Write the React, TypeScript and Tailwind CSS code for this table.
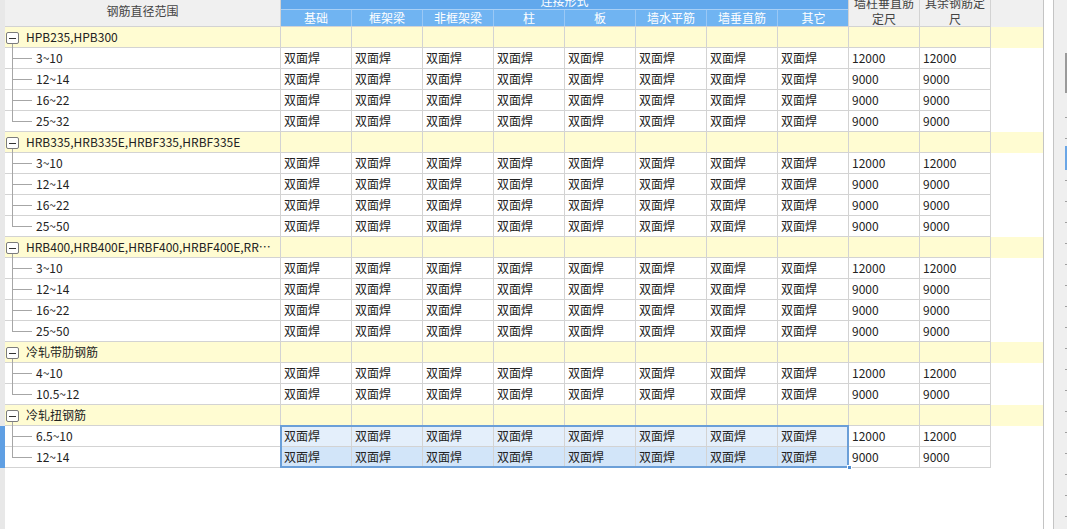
import React from 'react';

type Group = { name: string; items: [string, string][] };

const groups: Group[] = [
  { name: 'HPB235,HPB300', items: [['3~10', '12000'], ['12~14', '9000'], ['16~22', '9000'], ['25~32', '9000']] },
  { name: 'HRB335,HRB335E,HRBF335,HRBF335E', items: [['3~10', '12000'], ['12~14', '9000'], ['16~22', '9000'], ['25~50', '9000']] },
  { name: 'HRB400,HRB400E,HRBF400,HRBF400E,RRB400,RRB400E', items: [['3~10', '12000'], ['12~14', '9000'], ['16~22', '9000'], ['25~50', '9000']] },
  { name: '冷轧带肋钢筋', items: [['4~10', '12000'], ['10.5~12', '9000']] },
  { name: '冷轧扭钢筋', items: [['6.5~10', '12000'], ['12~14', '9000']] },
];

const subHeaders = ['基础', '框架梁', '非框架梁', '柱', '板', '墙水平筋', '墙垂直筋', '其它'];

const cell = 'w-[71px] shrink-0 border-r border-b border-[#d3d3d3] pl-[3px] leading-[20px] truncate';

const TreeBox = () => (
  <div className="absolute left-[1px] top-[5px] flex h-[12px] w-[13px] items-center justify-center rounded-[2px] border border-[#7c7c7c] bg-white">
    <div className="h-px w-[7px] bg-[#333]" />
  </div>
);

const App: React.FC = () => {
  return (
    <div
      className="flex h-[529px] w-[1068px] overflow-hidden bg-white text-[12px] text-[#222]"
      style={{ fontFamily: '"Noto Sans CJK SC", "Noto Sans", sans-serif' }}
    >
      {/* Left row-selector strip */}
      <div className="flex w-[5px] shrink-0 flex-col bg-[#e8e8e8]">
        <div className="h-[426px]" />
        <div className="h-[42px] bg-[#5f9fe3]" />
      </div>

      {/* Main grid panel */}
      <div className="flex w-[1039px] shrink-0 flex-col border-r border-[#c4c4c4]">
        {/* Header */}
        <div className="flex h-[27px] shrink-0 bg-[#f0f0f0]">
          <div className="w-[276px] shrink-0 border-r border-b border-[#d3d3d3] pt-[3px] text-center leading-[16px] text-[#444]">
            钢筋直径范围
          </div>
          <div className="flex w-[568px] shrink-0 flex-col border-r border-b border-[#d3d3d3] text-white">
            <div className="h-[9px] overflow-hidden bg-[#62a8ec]">
              <div className="-mt-[6px] text-center leading-[14px]">连接形式</div>
            </div>
            <div className="h-px bg-[#a9d0f6]" />
            <div className="flex h-[16px] bg-[#70b4f2]">
              {subHeaders.map((h, i) => (
                <div
                  key={h}
                  className={`w-[71px] shrink-0 text-center leading-[16px] ${i < 7 ? 'border-r border-[#9ac8f5]' : 'w-[70px]'}`}
                >
                  {h}
                </div>
              ))}
            </div>
          </div>
          {['墙柱垂直筋', '其余钢筋定'].map((t, i) => (
            <div key={t} className="h-[27px] w-[71px] shrink-0 overflow-hidden border-r border-b border-[#d3d3d3] text-center text-[#444]">
              <div className="-mt-[5px] leading-[16px]">{t}</div>
              <div className="leading-[16px]">{i === 0 ? '定尺' : '尺'}</div>
            </div>
          ))}
          <div className="flex-1" />
        </div>

        {/* Rows */}
        <div className="relative">
          {groups.map((g, gi) => (
            <React.Fragment key={g.name}>
              <div className="flex h-[21px] bg-[#fffcd2]">
                <div className="relative w-[276px] shrink-0 border-r border-b border-[#d3d3d3] pr-[4px] pl-[21px] leading-[20px]">
                  <TreeBox />
                  <div className="absolute top-[17px] -bottom-px left-[7px] w-px bg-[#a6a6a6]" />
                  <div className="truncate">{g.name}</div>
                </div>
                {Array.from({ length: 10 }).map((_, i) => (
                  <div key={i} className={cell} />
                ))}
              </div>
              {g.items.map(([range, len], ii) => {
                const last = ii === g.items.length - 1;
                const selected = gi === 4;
                const selBg = selected ? (ii === 0 ? 'bg-[#e4effb]' : 'bg-[#d2e5f9]') : '';
                return (
                  <div key={range + ii} className="flex h-[21px] bg-white">
                    <div className="relative w-[276px] shrink-0 border-r border-b border-[#d3d3d3] pl-[31px] leading-[20px]">
                      <div className={`absolute top-0 left-[7px] w-px bg-[#a6a6a6] ${last ? 'h-[10px]' : '-bottom-px'}`} />
                      <div className="absolute top-[10px] left-[7px] h-px w-[20px] bg-[#a6a6a6]" />
                      {range}
                    </div>
                    {subHeaders.map((h) => (
                      <div key={h} className={`${cell} ${selBg}`}>
                        双面焊
                      </div>
                    ))}
                    <div className={cell}>{len}</div>
                    <div className={cell}>{len}</div>
                  </div>
                );
              })}
            </React.Fragment>
          ))}

          {/* Selection rectangle */}
          <div className="pointer-events-none absolute top-[398px] left-[275px] h-[43px] w-[569px] border-2 border-[#6b9fd8]" />
          <div className="absolute top-[438px] left-[842px] h-[5px] w-[5px] border border-white bg-[#4f8ed4]" />
        </div>
      </div>

      {/* Right gap and ruler strip */}
      <div className="w-[9px] shrink-0 bg-white" />
      <div className="relative w-[14px] shrink-0 border-l border-[#c4c4c4] bg-[#efefef]">
        <div className="absolute top-[53px] right-0 h-[40px] w-[2px] bg-[#9a9a9a]" />
        <div className="absolute top-[146px] right-0 h-[24px] w-[2px] bg-[#6aa6e6]" />
        <div className="flex flex-col items-end pt-[117px]">
          {Array.from({ length: 20 }).map((_, i) => (
            <div key={i} className="h-[21px] w-full">
              <div className="ml-auto h-px w-[2px] bg-[#a0a0a0]" />
            </div>
          ))}
        </div>
      </div>
      <div className="flex-1 bg-white" />
    </div>
  );
};

export default App;
